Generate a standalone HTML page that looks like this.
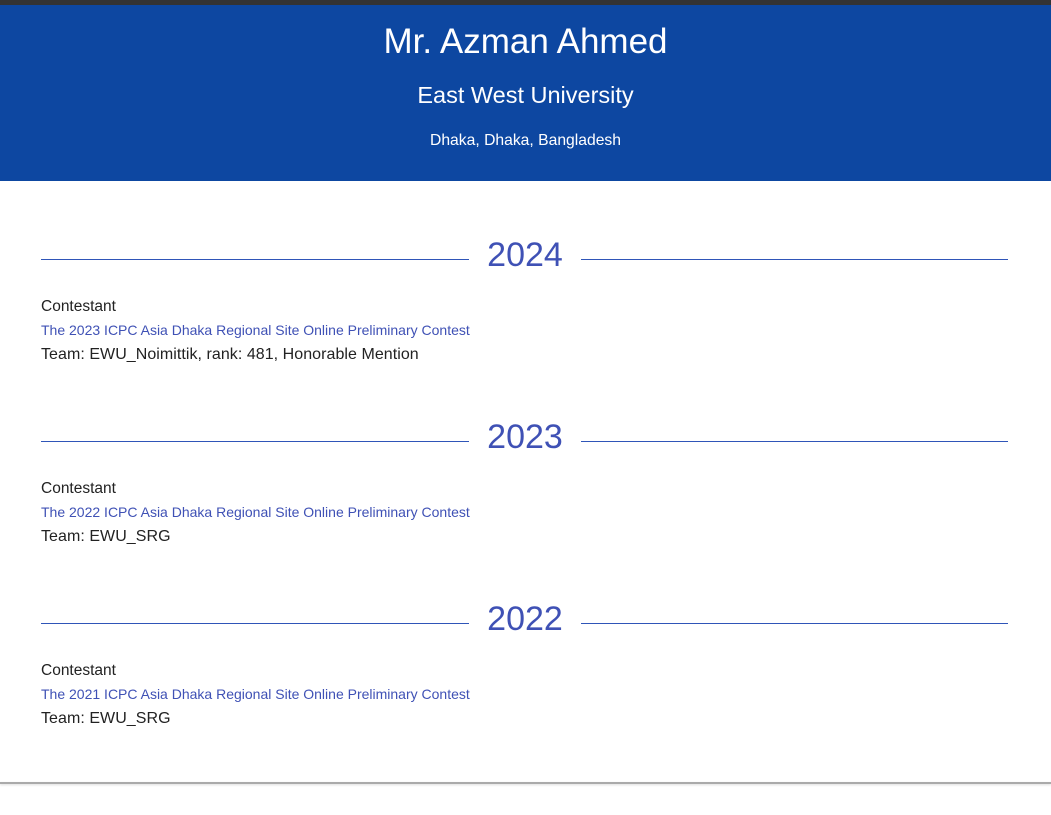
<!DOCTYPE html>
<html><head><meta charset="utf-8"><style>
*{margin:0;padding:0;box-sizing:border-box}
body{width:1051px;height:815px;background:#fff;font-family:"Liberation Sans",sans-serif;position:relative;overflow:hidden}
.top{position:absolute;left:0;top:0;width:1051px;height:5px;background:#333}
.hdr{position:absolute;left:0;top:5px;width:1051px;height:176px;background:#0d47a1;color:#fff;text-align:center}
.t{position:absolute;width:100%;text-align:center;white-space:nowrap}
.ln{position:absolute;height:1px;background:#2f55b8}
.yr{position:absolute;left:469px;width:112px;text-align:center;font-size:34px;color:#3f51b5;white-space:nowrap}
.a{position:absolute;left:41px;font-size:15.5px;color:#222;white-space:nowrap}
.b{position:absolute;left:41px;font-size:16px;color:#222;white-space:nowrap;letter-spacing:0.05px}
.l{position:absolute;left:41px;font-size:14px;color:#3f51b5;white-space:nowrap;letter-spacing:0}
.bot{position:absolute;left:0;top:782px;width:1051px;height:2px;background:#aaa;box-shadow:0 1px 2px rgba(0,0,0,.15)}
</style></head><body>
<div class="top"></div>
<div class="hdr">
<div class="t" style="top:17px;font-size:35px">Mr. Azman Ahmed</div>
<div class="t" style="top:77px;font-size:23.5px">East West University</div>
<div class="t" style="top:127px;font-size:15.7px">Dhaka, Dhaka, Bangladesh</div>
</div>

<div class="ln" style="left:41px;width:428px;top:259px"></div>
<div class="ln" style="left:581px;width:427px;top:259px"></div>
<div class="yr" style="top:236px">2024</div>
<div class="a" style="top:298px">Contestant</div>
<div class="l" style="top:322px">The 2023 ICPC Asia Dhaka Regional Site Online Preliminary Contest</div>
<div class="b" style="top:346px">Team: EWU_Noimittik, rank: 481, Honorable Mention</div>

<div class="ln" style="left:41px;width:428px;top:441px"></div>
<div class="ln" style="left:581px;width:427px;top:441px"></div>
<div class="yr" style="top:418px">2023</div>
<div class="a" style="top:480px">Contestant</div>
<div class="l" style="top:504px">The 2022 ICPC Asia Dhaka Regional Site Online Preliminary Contest</div>
<div class="b" style="top:528px">Team: EWU_SRG</div>

<div class="ln" style="left:41px;width:428px;top:623px"></div>
<div class="ln" style="left:581px;width:427px;top:623px"></div>
<div class="yr" style="top:600px">2022</div>
<div class="a" style="top:662px">Contestant</div>
<div class="l" style="top:686px">The 2021 ICPC Asia Dhaka Regional Site Online Preliminary Contest</div>
<div class="b" style="top:710px">Team: EWU_SRG</div>

<div class="bot"></div>
</body></html>
